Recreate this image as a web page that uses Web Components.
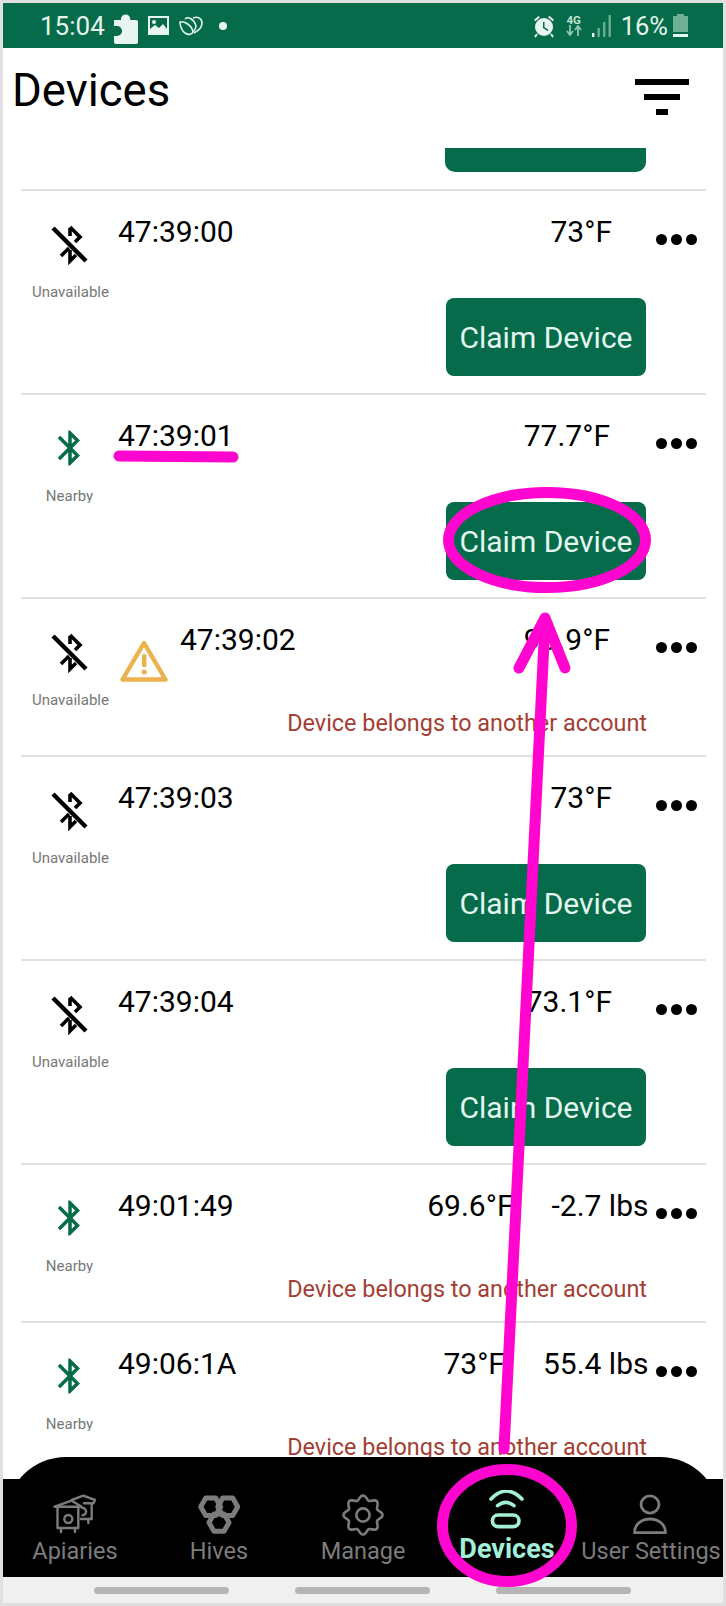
<!DOCTYPE html>
<html>
<head>
<meta charset="utf-8">
<title>Devices</title>
<style>
  html, body { margin: 0; height: 100%; }
  body { font-family: Roboto, "Liberation Sans", sans-serif; background: #e0e0e0; }
</style>
</head>
<body>
<app-frame>
  <status-bar></status-bar>
  <page-header>Devices</page-header>
  <device-list>
    <list-stub></list-stub>
    <device-row status="off" temp="73°F" name="47:39:00" style="--solo:35px"><claim-button slot="footer">Claim Device</claim-button></device-row>
    <device-row status="near" temp="77.7°F" name="47:39:01"><claim-button slot="footer">Claim Device</claim-button></device-row>
    <device-row status="off" temp="93.9°F" name="47:39:02" warn><owner-note slot="footer">Device belongs to another account</owner-note></device-row>
    <device-row status="off" temp="73°F" name="47:39:03" style="--solo:35px"><claim-button slot="footer">Claim Device</claim-button></device-row>
    <device-row status="off" temp="73.1°F" name="47:39:04" style="--solo:35px"><claim-button slot="footer">Claim Device</claim-button></device-row>
    <device-row status="near" temp="69.6°F" weight="-2.7 lbs" name="49:01:49"><owner-note slot="footer">Device belongs to another account</owner-note></device-row>
    <device-row status="near" temp="73°F" weight="55.4 lbs" name="49:06:1A"><owner-note slot="footer">Device belongs to another account</owner-note></device-row>
  </device-list>
  <tab-bar>
    <tab-item>
      <svg slot="icon" width="44" height="42" viewBox="0 0 44 42" fill="none" stroke="currentColor" stroke-width="2.4" stroke-linejoin="round" stroke-linecap="round">
        <path d="M1.5 12.7 L18.7 6.7 L28.7 12.7 Z"/>
        <path d="M4.5 13 V34 H25.3 V13"/>
        <path d="M8 34 V38 M22 34 V38"/>
        <circle cx="15.3" cy="25" r="4"/>
        <path d="M18.7 6 L30.3 1.7 L42 6 L40.5 9.3 H31"/>
        <path d="M38.7 9.3 V25 H28"/>
        <path d="M35.3 25 V29"/>
        <path d="M29.5 14 a3.6 3.6 0 0 1 0 7.2"/>
      </svg>
      Apiaries
    </tab-item>
    <tab-item>
      <svg slot="icon" width="44" height="42" viewBox="0 0 44 42" fill="none" stroke="currentColor" stroke-width="5" stroke-linejoin="round">
        <path d="M3.7 12.7 L8.7 4 H18.7 L23.7 12.7 L18.7 21.4 H8.7 Z"/>
        <path d="M20.7 12.7 L25.7 4 H35.7 L40.7 12.7 L35.7 21.4 H25.7 Z"/>
        <path d="M12 28.6 L17 19.9 H27 L32 28.6 L27 37.3 H17 Z"/>
      </svg>
      Hives
    </tab-item>
    <tab-item>
      <gear-icon slot="icon"></gear-icon>
      Manage
    </tab-item>
    <tab-item active>
      <svg slot="icon" width="38" height="42" viewBox="0 0 38 42" fill="none" stroke="currentColor" stroke-width="3.6" stroke-linecap="round">
        <path d="M3 9 Q18.5 -7 34 9"/>
        <path d="M9.5 15.7 Q17.8 9 26 15.7"/>
        <rect x="4.4" y="25" width="26.6" height="11.6" rx="5.8"/>
      </svg>
      Devices
    </tab-item>
    <tab-item>
      <svg slot="icon" width="38" height="42" viewBox="0 0 38 42" fill="none" stroke="currentColor" stroke-width="2.8" stroke-linejoin="round">
        <ellipse cx="18" cy="10.5" rx="9" ry="8.6"/>
        <path d="M2.5 38.7 C2.5 30 10 25 18 25 C26 25 33.5 30 33.5 38.7 Z"/>
      </svg>
      User Settings
    </tab-item>
  </tab-bar>
  <system-nav></system-nav>
</app-frame>
<markup-layer></markup-layer>

<script>
class AppFrame extends HTMLElement {
  constructor() {
    super();
    this.attachShadow({ mode: "open" });
    this.shadowRoot.innerHTML = `
      <style>
        :host { display: flex; flex-direction: column; box-sizing: border-box; width: 720px; height: 1600px; margin: 3px; background: #fff; overflow: hidden; }
      </style>
      <slot></slot>
    `;
  }
}

class StatusBar extends HTMLElement {
  constructor() {
    super();
    this.attachShadow({ mode: "open" });
    this.shadowRoot.innerHTML = `
      <style>
        :host { display: flex; flex: none; height: 45px; align-items: center; justify-content: space-between; background: #056b4a; color: #e4f4ec; font-size: 26px; padding: 0 35px 0 37px; }
        .side { display: flex; align-items: center; }
        svg { display: block; flex: none; }
        .net { display: flex; flex-direction: column; align-items: center; font-size: 11.5px; font-weight: 700; line-height: 10px; margin-left: 10px; width: 16px; color: #bfe3d3; }
        .pct { margin-left: 10px; font-size: 25.5px; }
      </style>
      <div class="side">
        <span>15:04</span>
        <svg style="margin-left:8px;margin-top:6px" width="26" height="31" viewBox="0 0 26 31" fill="#e9f6f0"><path d="M1 7 H8 V6 a4.6 4.6 0 1 1 9.2 0 V7 H23 a2 2 0 0 1 2 2 V29 a2 2 0 0 1 -2 2 H3 a2 2 0 0 1 -2 -2 V23 H4 a5 5 0 0 0 0 -10 H1 Z"/></svg>
        <svg style="margin-left:9px" width="21" height="19" viewBox="0 0 21 19"><rect width="21" height="19" fill="#e9f6f0"/><rect x="2" y="2" width="17" height="15" fill="#056b4a"/><path d="M2 17 L2 13 L7 9 L11 12 L15 8 L19 13 V17 Z" fill="#e9f6f0"/><circle cx="6" cy="6" r="2" fill="#e9f6f0"/></svg>
        <svg style="margin-left:10px" width="24" height="20" viewBox="0 0 24 20" fill="none" stroke="#e4f4ec" stroke-width="1.6"><path d="M1 6 C5 5 13 9 14 16 C13 19 9 19 6 17 C3 15 1 10 1 6 Z"/><path d="M6 3 C9 0 15 3 17 10 C17 12 16 14 14 16"/><path d="M14 2 C18 0 23 2 23 7 C23 12 19 15 15 17"/></svg>
        <svg style="margin-left:16px" width="8" height="8" viewBox="0 0 8 8"><circle cx="4" cy="4" r="4" fill="#e9f6f0"/></svg>
      </div>
      <div class="side">
        <svg width="24" height="24" viewBox="0 0 24 24" fill="#e9f6f0"><path d="M22 5.7 17.4 1.8l-1.3 1.5 4.6 3.9zM7.9 3.4 6.6 1.9 2 5.7l1.3 1.5z"/><path d="M12 4a9 9 0 1 0 0 18 9 9 0 0 0 0-18z"/><path d="M12.5 8H11v6l4.7 2.9.8-1.2-4-2.4z" fill="#056b4a"/><path d="M5 20 3 23M19 20l2 3" stroke="#e9f6f0" stroke-width="2"/></svg>
        <div class="net">4G
          <svg width="16" height="11" viewBox="0 0 16 11" fill="none" stroke="#8fc7ae" stroke-width="1.8"><path d="M4 0 V9 M1 6 L4 10 L7 6"/><path d="M12 11 V2 M9 5 L12 1 L15 5"/></svg>
        </div>
        <svg style="margin-left:10px" width="19" height="22" viewBox="0 0 19 22"><rect x="0" y="18" width="2.4" height="4" fill="#e9f6f0"/><rect x="5.5" y="13" width="2.4" height="9" fill="#6aae90"/><rect x="11" y="7" width="2.4" height="15" fill="#6aae90"/><rect x="16.5" y="0" width="2.4" height="22" fill="#6aae90"/></svg>
        <span class="pct">16%</span>
        <svg style="margin-left:5px" width="15" height="23" viewBox="0 0 15 23"><path d="M4 0 H11 V2 H15 V18 H0 V2 H4 Z" fill="#6fb096"/><rect y="20" width="15" height="3" fill="#e9f6f0"/></svg>
      </div>
    `;
  }
}

class PageHeader extends HTMLElement {
  constructor() {
    super();
    this.attachShadow({ mode: "open" });
    this.shadowRoot.innerHTML = `
      <style>
        :host { display: flex; flex: none; box-sizing: border-box; height: 100px; justify-content: space-between; padding: 17px 34px 0 9px; color: #000; font-size: 45.5px; line-height: 52px; }
        .filter { display: flex; flex-direction: column; align-items: center; gap: 9px; width: 54px; margin-top: 14px; }
        .filter i { display: block; height: 6px; background: #000; }
      </style>
      <slot></slot>
      <div class="filter"><i style="width:54px"></i><i style="width:36px"></i><i style="width:12px"></i></div>
    `;
  }
}

class DeviceList extends HTMLElement {
  constructor() {
    super();
    this.attachShadow({ mode: "open" });
    this.shadowRoot.innerHTML = `
      <style>
        :host { display: block; flex: 1 1 0; min-height: 0; overflow: hidden; padding: 0 17px 0 18px; }
      </style>
      <slot></slot>
    `;
  }
}

class ListStub extends HTMLElement {
  constructor() {
    super();
    this.attachShadow({ mode: "open" });
    this.shadowRoot.innerHTML = `
      <style>
        :host { display: flex; box-sizing: border-box; height: 43px; justify-content: flex-end; padding-right: 60px; border-bottom: 2px solid #e0e0e0; }
        div { width: 201px; height: 24px; background: #056b4a; border-radius: 0 0 10px 10px; }
      </style>
      <div></div>
    `;
  }
}

const btOn = `<svg width="42" height="42" viewBox="0 0 24 24" fill="#056b4a"><path d="M17.71 7.71 12 2h-1v7.59L6.41 5 5 6.41 10.59 12 5 17.59 6.41 19 11 14.41V22h1l5.71-5.71-4.3-4.29 4.3-4.29zM13 5.83l1.88 1.88L13 9.59V5.83zm1.88 10.46L13 18.17v-3.76l1.88 1.88z"/></svg>`;
const btOff = `<svg width="42" height="42" viewBox="0 0 42 42" fill="none" stroke="#000" stroke-width="3.6"><path d="M21 5 V13 M21 4 L31 14 L26 19"/><path d="M12 33 L20 25"/><path d="M21 27 V38 L27 32"/><path d="M4 5 L37 38" stroke-width="4.4"/></svg>`;
const warnIcon = `<svg class="warn" width="48" height="43" viewBox="0 0 48 43" fill="none"><path d="M24 4 L45.5 40.5 H2.5 Z" stroke="#ecb24e" stroke-width="4.4" stroke-linejoin="round"/><rect x="22" y="15" width="4.4" height="13" rx="1.5" fill="#ecb24e"/><circle cx="24.2" cy="33" r="2.6" fill="#ecb24e"/></svg>`;

class DeviceRow extends HTMLElement {
  constructor() {
    super();
    this.attachShadow({ mode: "open" });
  }

  connectedCallback() {
    const near = this.getAttribute("status") === "near";
    const weight = this.getAttribute("weight");
    this.shadowRoot.innerHTML = `
      <style>
        :host { display: grid; grid-template-columns: 97px 1fr 59px; box-sizing: border-box; border-bottom: 2px solid #e0e0e0; padding-top: 23px; padding-bottom: 17px; color: #000; font-size: 30px; }
        .state { grid-row: 1 / 3; display: flex; flex-direction: column; align-items: center; padding-top: 9px; }
        .state svg { display: block; flex: none; }
        .state span { display: block; margin-top: 18px; font-size: 15px; line-height: 18px; color: #777; }
        .state .off { margin-left: 2px; }
        .state .near { height: 16px; overflow: hidden; }
        .top { display: flex; height: 36px; line-height: 36px; }
        .warn { flex: none; margin: 17px 12px 0 2px; }
        .name { flex: 1; }
        .weight { margin: 0 -1.5px 0 38px; }
        .temp.solo { margin-right: var(--solo, 37px); }
        .dots { grid-row: 1; grid-column: 3; display: flex; justify-content: flex-end; gap: 4px; padding: 20px 9px 0 0; }
        .dots i { width: 11px; height: 11px; border-radius: 50%; background: #000; }
        .footer { grid-column: 2; display: flex; justify-content: flex-end; margin-top: 48px; }
      </style>
      <div class="state">${near ? btOn : btOff}<span class="${near ? "near" : "off"}">${near ? "Nearby" : "Unavailable"}</span></div>
      <div class="top">
        ${this.hasAttribute("warn") ? warnIcon : ""}
        <span class="name">${this.getAttribute("name")}</span>
        <span class="temp ${weight ? "" : "solo"}">${this.getAttribute("temp")}</span>
        ${weight ? `<span class="weight">${weight}</span>` : ""}
      </div>
      <div class="dots"><i></i><i></i><i></i></div>
      <div class="footer"><slot name="footer"></slot></div>
    `;
  }
}

class ClaimButton extends HTMLElement {
  constructor() {
    super();
    this.attachShadow({ mode: "open" });
    this.shadowRoot.innerHTML = `
      <style>
        :host { display: flex; width: 200px; height: 78px; margin-right: 1px; align-items: center; justify-content: center; background: #056b4a; border-radius: 8px; color: #e4f8f0; font-size: 30px; }
      </style>
      <slot></slot>
    `;
  }
}

class OwnerNote extends HTMLElement {
  constructor() {
    super();
    this.attachShadow({ mode: "open" });
    this.shadowRoot.innerHTML = `
      <style>
        :host { display: block; height: 30px; margin-top: 2px; line-height: 30px; color: #a43e33; font-size: 23.4px; white-space: nowrap; }
      </style>
      <slot></slot>
    `;
  }
}

class TabBar extends HTMLElement {
  constructor() {
    super();
    this.attachShadow({ mode: "open" });
    this.shadowRoot.innerHTML = `
      <style>
        :host { display: block; flex: none; position: relative; margin-top: -22px; }
        .cap { height: 22px; overflow: hidden; padding: 0 3px; }
        .cap div { height: 120px; background: #000; border-radius: 60px 60px 0 0; }
        .tabs { display: grid; grid-template-columns: repeat(5, 1fr); height: 98px; background: #000; }
      </style>
      <div class="cap"><div></div></div>
      <div class="tabs"><slot></slot></div>
    `;
  }
}

class TabItem extends HTMLElement {
  constructor() {
    super();
    this.attachShadow({ mode: "open" });
    this.shadowRoot.innerHTML = `
      <style>
        :host { display: flex; flex-direction: column; align-items: center; padding-top: 14px; color: #7c7c7c; font-size: 23.5px; line-height: 28px; white-space: nowrap; }
        :host([active]) { color: #a2f0d9; font-weight: 700; font-size: 27px; margin-top: -4px; }
        :host([active]) .label { margin-top: 2px; }
        .icon { display: flex; align-items: center; justify-content: center; height: 44px; }
      </style>
      <div class="icon"><slot name="icon"></slot></div>
      <div class="label"><slot></slot></div>
    `;
  }
}

class GearIcon extends HTMLElement {
  constructor() {
    super();
    this.attachShadow({ mode: "open" });
    // eight soft teeth round the wheel
    const points = [];
    for (let i = 0; i < 120; i++) {
      const a = (i / 120) * Math.PI * 2;
      const r = 17.4 + 2.1 * Math.cos(8 * a);
      points.push((22 + r * Math.sin(a)).toFixed(1) + " " + (21 - r * Math.cos(a)).toFixed(1));
    }
    this.shadowRoot.innerHTML = `
      <style>
        :host { display: block; width: 44px; height: 42px; }
        svg { display: block; }
      </style>
      <svg width="44" height="42" viewBox="0 0 44 42" fill="none" stroke="currentColor" stroke-width="2.6" stroke-linejoin="round">
        <path d="M${points.join(" L")} Z"/>
        <circle cx="22" cy="21" r="6.6"/>
      </svg>
    `;
  }
}

class SystemNav extends HTMLElement {
  constructor() {
    super();
    this.attachShadow({ mode: "open" });
    this.shadowRoot.innerHTML = `
      <style>
        :host { display: flex; flex: none; height: 26px; box-sizing: border-box; justify-content: flex-start; gap: 66px; background: #f0f0f0; padding: 10px 0 0 91px; }
        i { display: block; width: 135px; height: 7px; border-radius: 4px; background: #b5b5b5; }
      </style>
      <i></i><i></i><i></i>
    `;
  }
}

class MarkupLayer extends HTMLElement {
  constructor() {
    super();
    this.attachShadow({ mode: "open" });
    this.shadowRoot.innerHTML = `
      <style>
        :host { display: block; position: absolute; left: 0; top: 0; width: 726px; height: 1606px; pointer-events: none; }
      </style>
      <svg width="726" height="1606" fill="none" stroke="#ff05cf" stroke-width="11" stroke-linecap="round" stroke-linejoin="round">
        <path d="M119 456 L233 457"/>
        <ellipse cx="547" cy="540" rx="98.5" ry="47.5"/>
        <path d="M504 1449 L545 622"/>
        <path d="M519 668 L545 618 L565 668"/>
        <ellipse cx="507" cy="1525.5" rx="64.5" ry="56"/>
      </svg>
    `;
  }
}

customElements.define("app-frame", AppFrame);
customElements.define("status-bar", StatusBar);
customElements.define("page-header", PageHeader);
customElements.define("device-list", DeviceList);
customElements.define("list-stub", ListStub);
customElements.define("device-row", DeviceRow);
customElements.define("claim-button", ClaimButton);
customElements.define("owner-note", OwnerNote);
customElements.define("tab-bar", TabBar);
customElements.define("tab-item", TabItem);
customElements.define("gear-icon", GearIcon);
customElements.define("system-nav", SystemNav);
customElements.define("markup-layer", MarkupLayer);
</script>
</body>
</html>
